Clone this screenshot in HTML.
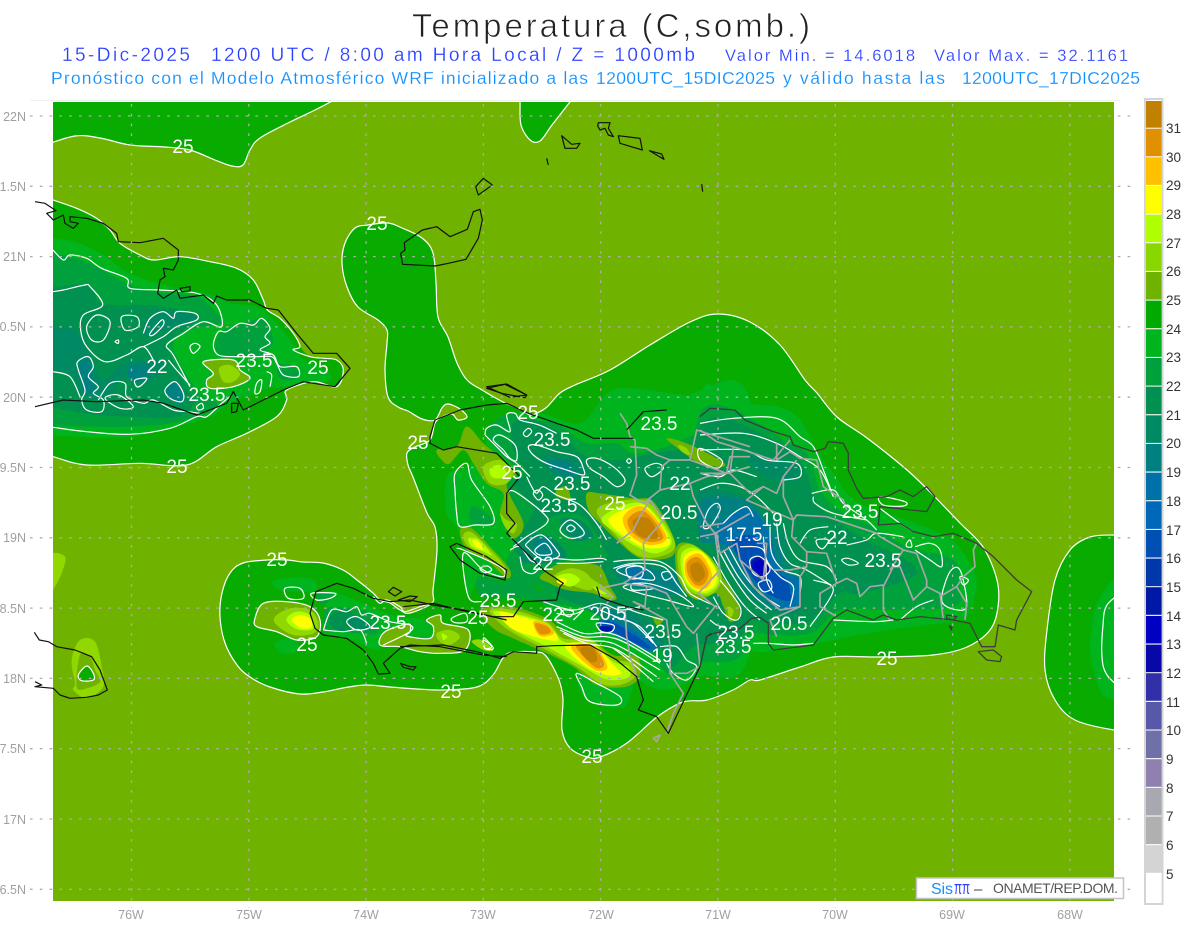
<!DOCTYPE html>
<html><head><meta charset="utf-8"><style>
html,body{margin:0;padding:0;background:#fff;width:1200px;height:927px;overflow:hidden}
svg{display:block;font-family:"Liberation Sans",sans-serif}
.z4{transform:translate(400px,380px) scale(.33333)}
.z5{transform:translate(700px,380px) scale(.33333)}
.z6{transform:translate(30px,190px) scale(.33333)}
.z9{transform:translate(335px,170px) scale(.33333)}
.z10{transform:translate(210px,550px) scale(.33333)}
.z11{transform:translate(30px,540px) scale(.33333)}
.z12{transform:translate(530px,100px) scale(.33333)}
.b{fill:#70b200}.c24{fill:#08ac00}.c23{fill:#00b41e}.c22{fill:#00a03c}.c21{fill:#009050}.c20{fill:#008a64}.c19{fill:#008080}.c18{fill:#0070a8}.c17{fill:#0050b4}.c16{fill:#0018a8}.c15{fill:#0000c4}
.w26{fill:#90d800}.w27{fill:#b0ff00}.w28{fill:#ffff00}.w29{fill:#ffc000}.w30{fill:#e09000}.w31{fill:#c08000}
.l{fill:none;stroke:#fff;stroke-width:1.2;stroke-linejoin:round;vector-effect:non-scaling-stroke}
.k{fill:none;stroke:#111;stroke-width:1.2;stroke-linejoin:round;vector-effect:non-scaling-stroke}
.d{fill:none;stroke:#3c3c3c;stroke-width:1.3;stroke-linejoin:round;vector-effect:non-scaling-stroke}
.g{fill:none;stroke:#a6a6a6;stroke-width:1.7;stroke-linejoin:round;vector-effect:non-scaling-stroke}
.ln{stroke:#adadad;stroke-width:1.3;stroke-dasharray:2.6 7.2;fill:none}
.ax{fill:#a0a0a0;font-size:12.5px}
.m{fill:#fff;font-size:19px;text-anchor:middle}
.cb{fill:#333;font-size:13.5px}
</style></head><body>
<svg width="1200" height="927" viewBox="0 0 1200 927" xmlns="http://www.w3.org/2000/svg">
<defs><clipPath id="mp"><rect x="53" y="102" width="1061" height="799"/></clipPath></defs>

<text x="412" y="37" font-size="33" fill="#222" stroke="#fff" stroke-width=".7" textLength="398" lengthAdjust="spacing">Temperatura (C,somb.)</text>
<g fill="#2a40ff" stroke="#fff" stroke-width=".2">
<text x="62" y="61" font-size="19" textLength="128" lengthAdjust="spacing">15-Dic-2025</text>
<text x="211" y="61" font-size="19" textLength="484" lengthAdjust="spacing">1200 UTC / 8:00 am Hora Local / Z = 1000mb</text>
<text x="725" y="61" font-size="16.5" textLength="190" lengthAdjust="spacing">Valor Min. = 14.6018</text>
<text x="934" y="61" font-size="16.5" textLength="194" lengthAdjust="spacing">Valor Max. = 32.1161</text>
</g>
<g fill="#1090ff" stroke="#fff" stroke-width=".15">
<text x="51" y="84" font-size="17.5" textLength="537" lengthAdjust="spacing">Pronóstico con el Modelo Atmosférico WRF inicializado a las</text>
<text x="596" y="84" font-size="17.5" textLength="179" lengthAdjust="spacing">1200UTC_15DIC2025</text>
<text x="783" y="84" font-size="17.5" textLength="162" lengthAdjust="spacing">y válido hasta las</text>
<text x="962" y="84" font-size="17.5" textLength="178" lengthAdjust="spacing">1200UTC_17DIC2025</text>
</g>

<rect x="30" y="100" width="1090" height="1" fill="#f0f0f0"/>
<rect x="53" y="102" width="1061" height="799" fill="#70b200"/>

<g id="fld" clip-path="url(#mp)">
<!-- 24 layer -->
<polygon class="c24" points="-40,152 10,150 40,146 75,136 100,138 130,145 165,147 190,150 215,160 232,166 243,165 250,150 260,138 290,122 315,110 338,98 370,70 -40,70"/>
<polygon class="c24" points="516,60 519,85 520,102 521,125 530,140 540,141 552,125 573,98 600,60"/>
<polygon class="c24" points="-120,-40 -40,-10 20,15 69,30 140,55 200,85 240,120 270,160 330,195 372,210 450,200 540,215 620,235 670,270 700,330 712,360 750,385 790,430 810,470 840,500 880,505 920,510 940,540 920,590 850,575 770,600 770,630 740,680 650,730 560,770 470,825 330,820 170,825 69,800 -40,770 -120,760" transform="translate(30,190) scale(.33333)"/>
<polygon class="c24" points="368,225 355,228 345,243 342,263 347,287 358,307 378,320 387,330 387,343 385,370 388,397 398,407 408,411 422,419 435,420 442,408 448,404 460,409 467,417 458,420 452,414 442,417 435,423 430,440 415,447 407,453 408,465 413,477 427,513 435,527 437,550 433,590 432,603 410,613 400,610 390,603 380,600 373,593 357,580 343,570 323,563 303,562 287,560 267,560 243,563 230,573 222,593 220,617 225,643 237,665 250,677 270,687 300,694 323,692 343,688 365,685 390,687 417,689 443,690 477,687 493,675 503,658 513,652 537,652 545,655 553,667 560,683 563,700 562,730 570,748 587,757 600,757 627,743 657,717 683,702 707,700 733,690 750,680 760,680 800,667 833,657 877,657 933,655 967,647 990,630 998,607 997,580 983,547 960,523 933,495 907,470 867,438 837,417 817,393 805,380 780,345 750,322 718,314 690,322 650,345 610,370 575,385 560,393 547,407 537,413 530,415 522,410 505,403 482,390 467,380 457,363 448,337 438,317 436,283 433,253 422,238 402,228 388,223"/>
<polygon class="c24" points="1180,535 1140,535 1114,535 1090,537 1070,550 1055,580 1047,630 1045,670 1055,700 1075,720 1114,730 1140,731 1180,733"/>

<!-- 23 layer -->
<polygon class="c23 z4" points="140,290 200,260 250,200 300,110 420,100 540,130 620,40 700,25 850,45 1050,60 1050,810 900,890 800,930 720,900 690,830 640,800 500,750 430,680 420,600 300,600 240,590 205,650 190,520 170,440 140,400"/>
<polygon class="c23 z4" points="530,880 580,870 690,890 690,950 660,985 560,960"/>
<polygon class="c23 z5" points="0,60 100,70 230,80 300,120 355,220 400,280 440,340 500,380 620,420 740,470 790,520 830,600 810,690 780,720 640,740 500,760 300,800 170,815 120,780 0,750"/>
<polygon class="c23 z6" points="-100,125 -20,135 20,140 130,155 210,190 300,250 420,290 530,310 600,340 680,350 740,400 790,460 820,510 870,530 900,570 760,590 700,600 600,640 540,680 420,715 300,740 140,740 20,730 -20,725 -100,720"/>
<polygon class="c23 z10" points="195,90 300,85 320,120 250,125 200,115"/>
<polygon class="c23 z10" points="195,280 250,265 265,300 220,310"/>
<polygon class="c23 z10" points="330,130 370,125 480,170 560,200 650,210 670,260 640,270 530,260 500,300 430,270 370,260 340,240 350,170"/>
<polygon class="c23" points="1180,560 1140,570 1114,580 1105,590 1095,610 1090,650 1100,690 1114,700 1140,710 1180,715"/>

<!-- 22 layer -->
<polygon class="c22 z4" points="260,150 330,100 380,120 470,130 560,190 650,190 700,220 800,200 900,160 1050,150 1050,770 900,850 860,885 800,880 740,800 650,730 520,680 430,670 420,620 320,610 320,540 350,490 320,420 340,370 300,320 360,280 300,220"/>
<polygon class="c22 z4" points="215,380 260,400 280,430 215,430"/>
<polygon class="c22 z4" points="235,590 320,610 400,620 440,660 300,650 240,650"/>
<polygon class="c22 z5" points="0,100 270,190 330,240 360,330 430,400 520,440 620,500 760,540 780,630 760,680 560,690 420,690 330,760 180,760 0,720"/>
<polygon class="c22 z6" points="-100,165 -20,175 20,180 120,200 200,230 290,280 400,310 500,320 560,370 570,400 480,420 430,470 500,600 560,640 530,670 420,700 300,710 150,710 20,710 -20,708 -100,705"/>
<polygon class="c22 z6" points="570,430 640,400 700,390 730,450 710,500 800,540 800,565 750,565 720,500 600,500 560,490"/>
<polygon class="c22 z10" points="340,190 370,170 450,180 500,200 500,250 450,250 400,245 350,240"/>
<polygon class="c22 z10" points="320,130 370,130 340,165"/>

<!-- 21 layer -->
<polygon class="c21 z4" points="340,130 400,120 480,160 560,230 660,240 760,220 900,200 1050,190 1050,720 880,800 810,860 760,740 640,700 500,660 470,620 560,540 620,530 560,420 500,400 440,420 400,470 360,520 340,490 380,430 400,380 340,310 380,280 340,210"/>
<polygon class="c21 z5" points="0,140 240,190 310,260 360,380 480,470 620,540 640,590 480,640 420,640 340,720 220,730 100,700 0,650"/>
<polygon class="c21 z6" points="-100,310 -20,305 20,300 170,285 215,340 350,345 450,360 500,385 420,450 410,470 470,590 490,640 440,680 300,680 160,670 20,640 -20,635 -100,630"/>
<polygon class="c21 z10" points="360,200 410,180 440,200 490,230 460,240 380,240"/>

<!-- 20 layer -->
<polygon class="c20 z4" points="430,230 540,240 550,290 470,290"/>
<polygon class="c20 z4" points="380,470 450,470 500,530 420,550 360,540"/>
<polygon class="c20 z4" points="480,420 540,420 580,470 520,480"/>
<polygon class="c20 z4" points="560,680 700,690 800,800 720,780"/>
<polygon class="c20 z4" points="640,550 840,580 860,650 700,640"/>
<polygon class="c20 z5" points="0,330 130,350 170,380 250,450 270,540 300,620 300,690 240,700 180,680 120,620 70,540 40,500 0,460"/>
<polygon class="c20 z5" points="140,230 280,250 290,300 200,290"/>
<polygon class="c20 z6" points="-100,420 -20,420 20,420 130,420 200,540 220,570 300,510 400,520 350,580 280,560 220,630 150,610 130,560 20,520 -20,520 -100,520"/>
<polygon class="c20 z6" points="370,370 490,370 500,395 430,410 360,440 340,420"/>
<polygon class="c20 z10" points="410,210 440,200 480,225 450,235"/>

<!-- cold -->
<polygon class="c19 z4" points="660,550 840,590 830,640 700,620"/>
<polygon class="c19 z4" points="620,690 700,720 780,800 700,790"/>
<polygon class="c19 z4" points="400,490 440,475 470,520 430,535"/>
<polygon class="c19 z4" points="440,245 500,245 530,285 470,275"/>
<polygon class="c19 z5" points="0,370 60,350 130,360 170,390 230,470 260,570 300,600 290,690 240,690 180,660 120,600 80,530 40,490 0,480"/>
<polygon class="c19 z6" points="150,520 180,510 190,580 200,600 165,610 150,560"/>
<polygon class="c19 z6" points="405,600 435,575 460,610 450,640 420,625"/>
<polygon class="c19 z6" points="300,530 360,530 340,570 300,570"/>
<polygon class="c18 z4" points="590,730 640,720 760,790 750,815 650,770"/>
<polygon class="c18 z4" points="680,560 720,565 740,590 700,610"/>
<polygon class="c18 z4" points="960,430 1050,400 1050,490 970,490"/>
<polygon class="c18 z5" points="60,430 130,385 170,400 210,470 240,570 300,600 290,680 240,680 190,640 130,570 100,510 50,480"/>
<polygon class="c17 z4" points="600,732 640,728 740,790 740,805 660,765"/>
<polygon class="c17 z5" points="100,480 170,470 210,560 260,600 270,660 220,650 180,620 120,540"/>
<polygon class="c16 z5" points="150,550 180,530 210,560 190,590 160,580"/>
<polygon class="c15 z5" points="160,552 180,540 200,560 185,580 165,572"/>
<polygon class="c16 z4" points="600,740 635,740 630,755 605,752"/>

<!-- warm blob 1 -->
<polygon class="b z4" points="560,340 600,340 700,355 760,365 820,470 820,525 760,540 710,530 650,480 600,430 565,390"/>
<polygon class="w26 z4" points="590,390 680,360 755,375 825,490 780,530 710,525 650,470"/>
<polygon class="w27 z4" points="605,415 690,370 750,385 815,480 770,520 710,500 650,460"/>
<polygon class="w28 z4" points="625,420 700,380 745,385 810,485 750,505 690,480"/>
<polygon class="w29 z4" points="670,410 730,380 800,470 750,495 690,465"/>
<polygon class="w30 z4" points="685,415 735,395 790,470 745,485 695,455"/>
<polygon class="w31 z4" points="700,420 745,415 775,470 740,475 710,460"/>
<!-- warm blob 2 -->
<polygon class="b z4" points="830,500 870,490 930,530 960,580 1000,640 1020,700 990,725 970,680 950,640 900,660 860,640 830,580"/>
<polygon class="w26 z4" points="835,510 880,495 945,550 965,600 930,645 870,635 840,590"/>
<polygon class="w26 z4" points="985,680 1000,690 995,710 985,705"/>
<polygon class="w27 z4" points="845,520 890,505 945,560 955,610 920,640 875,628 848,590"/>
<polygon class="w28 z4" points="852,530 900,512 945,565 945,615 900,635 858,600"/>
<polygon class="w29 z4" points="858,540 900,522 935,580 922,622 885,624 858,590"/>
<polygon class="w30 z4" points="863,545 895,532 925,575 912,612 885,614 863,580"/>
<polygon class="w31 z4" points="873,555 897,548 915,580 902,603 885,603 873,580"/>
<!-- southern strip -->
<polygon class="b z4" points="240,690 330,680 440,715 500,765 570,775 640,825 710,830 720,885 680,920 590,915 520,860 430,815 340,775 280,745"/>
<polygon class="w26 z4" points="270,690 340,690 440,725 490,775 570,780 640,835 695,850 705,890 660,915 600,910 530,860 430,805 350,765 300,730"/>
<polygon class="w27 z4" points="280,695 340,700 440,730 490,785 570,790 640,845 685,860 685,892 620,898 540,855 440,800 350,755 310,725"/>
<polygon class="w28 z4" points="300,695 345,705 440,735 475,780 420,775 340,748 310,720"/>
<polygon class="w28 z4" points="495,795 580,795 640,855 665,880 620,885 550,855"/>
<polygon class="w29 z4" points="400,725 440,732 462,760 420,768"/>
<polygon class="w29 z4" points="515,798 582,798 622,860 590,872 540,835"/>
<polygon class="w30 z4" points="405,730 440,738 452,757 420,762"/>
<polygon class="w30 z4" points="528,800 578,800 612,852 585,862"/>
<polygon class="w31 z4" points="542,803 577,803 592,837 575,847 550,827"/>
<!-- central Haiti blob -->
<polygon class="b z4" points="420,590 480,550 540,550 600,560 630,620 650,655 620,660 580,640 500,630 450,610"/>
<polygon class="w26 z4" points="460,590 510,565 560,580 580,620 560,630 500,610"/>
<polygon class="w26 z4" points="560,590 610,620 640,650 600,645"/>
<polygon class="w27 z4" points="470,590 510,580 540,600 510,620 480,605"/>
<polygon class="w27 z4" points="580,620 620,640 600,640"/>
<polygon class="w28 z4" points="480,595 500,600 490,615 470,605"/>
<!-- NW Haiti -->
<polygon class="b z4" points="200,140 250,190 310,240 350,280 320,320 370,430 345,475 320,450 300,400 310,340 260,310 220,250 190,210 150,250 130,245 110,210 170,200"/>
<polygon class="w26 z4" points="250,260 300,240 340,270 320,310 270,310"/>
<polygon class="w27 z4" points="270,265 300,255 320,280 300,295 275,290"/>
<polygon class="w26 z4" points="300,400 320,420 350,430 340,460 315,440"/>
<polygon class="b z4" points="180,450 215,445 280,510 330,570 320,595 260,540 200,510"/>
<polygon class="w26 z4" points="190,465 220,460 300,540 320,575 260,530 205,500"/>
<polygon class="w27 z4" points="205,475 235,478 275,525 250,515 215,500"/>
<polygon class="w28 z4" points="218,482 235,485 250,510 225,498"/>
<polygon class="b z4" points="470,330 500,320 510,360 470,350"/>
<polygon class="b z4" points="800,175 860,190 960,240 970,260 900,250 840,210"/>
<polygon class="w26 z4" points="835,195 860,205 870,225 845,215"/>
<polygon class="b z4" points="760,710 790,720 770,735"/>
<!-- SW Haiti -->
<polygon class="b z10" points="135,205 160,160 230,155 300,170 330,210 320,260 260,270 200,245 140,230"/>
<polygon class="w26 z10" points="195,200 240,175 300,180 325,220 310,250 250,255 200,225"/>
<polygon class="w27 z10" points="230,205 260,185 300,195 310,235 270,240 240,225"/>
<polygon class="w28 z10" points="245,210 270,195 300,205 305,230 275,235"/>
<polygon class="b z10" points="650,210 690,195 700,220 775,240 765,300 690,310 630,305 570,290 510,285 525,245 595,222 600,245 590,258 660,265 670,230"/>
<polygon class="w26 z10" points="680,250 720,240 750,260 720,285 690,275"/>
<polygon class="w27 z10" points="695,250 712,260 700,270"/>
<polygon class="w26 z10" points="785,275 815,270 850,300 820,300"/>
<!-- Cuba warm -->
<polygon class="b z6" points="520,515 610,510 630,540 660,565 610,590 540,595 530,570 550,550"/>
<polygon class="w26 z6" points="567,535 600,525 630,550 610,575 580,575"/>
<!-- Jamaica warm -->
<polygon class="w26 z11" points="150,300 195,305 215,380 220,440 170,475 130,450 135,430 125,360"/>
<polygon class="b z11" points="150,345 180,350 195,390 210,425 170,445 140,440"/>
<polygon class="c24 z11" points="145,405 170,378 190,400 190,420 155,422"/>
<polygon class="w26 z11" points="60,48 105,50 95,100 69,150 60,160"/>

<!-- 25 contours -->
<g class="l">
<polyline class="l" points="10,150 40,146 75,136 100,138 130,145 165,147 190,150 215,160 232,166 243,165 250,150 260,138 290,122 315,110 338,98"/>
<polyline class="l" points="519,85 520,102 521,125 530,140 540,141 552,125 573,98"/>
<polyline class="l z6" points="-40,-10 20,15 69,30 140,55 200,85 240,120 270,160 330,195 372,210 450,200 540,215 620,235 670,270 700,330 712,360 750,385 790,430 810,470 790,480 840,500 880,505 920,510 940,540 920,590 850,575 770,600 770,630 740,680 650,730 560,770 470,825 330,820 170,825 69,800 -40,770"/>
<polygon class="l" points="368,225 355,228 345,243 342,263 347,287 358,307 378,320 387,330 387,343 385,370 388,397 398,407 408,411 422,419 435,420 442,408 448,404 460,409 467,417 458,420 452,414 442,417 435,423 430,440 415,447 407,453 408,465 413,477 427,513 435,527 437,550 433,590 432,603 410,613 400,610 390,603 380,600 373,593 357,580 343,570 323,563 303,562 287,560 267,560 243,563 230,573 222,593 220,617 225,643 237,665 250,677 270,687 300,694 323,692 343,688 365,685 390,687 417,689 443,690 477,687 493,675 503,658 513,652 537,652 545,655 553,667 560,683 563,700 562,730 570,748 587,757 600,757 627,743 657,717 683,702 707,700 733,690 750,680 760,680 800,667 833,657 877,657 933,655 967,647 990,630 998,607 997,580 983,547 960,523 933,495 907,470 867,438 837,417 817,393 805,380 780,345 750,322 718,314 690,322 650,345 610,370 575,385 560,393 547,407 537,413 530,415 522,410 505,403 482,390 467,380 457,363 448,337 438,317 436,283 433,253 422,238 402,228 388,223"/>
<polyline class="l" points="1140,535 1114,535 1090,537 1070,550 1055,580 1047,630 1045,670 1055,700 1075,720 1114,730 1140,731"/>
<polyline class="l" points="1125,590 1107,605 1103,625 1102,657 1107,675 1125,692"/>
<polygon class="l z11" points="145,405 170,378 190,400 190,420 155,422"/>

<!-- Cuba -->
<polyline class="l z6" points="69,180 100,210 120,195 170,205 215,235 290,265 300,295 390,300 500,310 560,345 575,410 520,395 460,430 410,465 430,495 480,590"/>
<polyline class="l z6" points="69,305 100,300 165,285 180,290 218,345 160,375 152,420 170,470 225,515 290,495 340,470 370,510"/>
<polygon class="l z6" points="170,410 200,375 240,395 220,450 185,450"/>
<polygon class="l z6" points="275,380 320,380 325,410 285,420"/>
<polyline class="l z6" points="340,430 360,385 400,365 430,385 440,365 495,370 500,390 440,410 400,440 340,470"/>
<polygon class="l z6" points="360,430 395,390 400,405 370,435"/>
<polygon class="l z6" points="143,515 175,500 190,530 175,560 205,590 190,610 220,630 215,665 170,660 155,630 165,600 145,540"/>
<polyline class="l z6" points="69,545 120,560 150,620"/>
<polyline class="l z6" points="205,630 240,580 285,580 290,620 340,640 370,630 430,660 475,665 510,670"/>
<polygon class="l z6" points="405,600 435,575 460,610 455,635 420,625"/>
<polygon class="l z6" points="315,570 350,565 335,585 320,590"/>
<polygon class="l z6" points="225,625 265,615 310,650 270,655"/>
<polyline class="l z6" points="415,510 440,540 480,585"/>
<polygon class="l z6" points="550,465 565,425 590,425 630,400 670,405 695,385 720,415 705,440 720,460 690,480 730,495 750,530 800,530 805,560 760,555 740,520 725,500 680,500 610,500 565,495"/>
<polygon class="l z6" points="520,515 610,510 630,540 660,565 610,590 540,595 530,570 550,550"/>
<polygon class="l z6" points="480,470 495,460 510,470 490,490"/>
<polygon class="l z6" points="680,580 695,570 690,605 675,610"/>
<polygon class="l z6" points="500,650 515,640 520,655 505,660"/>
<polyline class="l z6" points="69,712 170,725 300,733 420,715 500,680 530,680 575,640 600,620"/>
<polyline class="l z6" points="710,545 725,555 720,590"/>
<polygon class="l z6" points="255,455 265,450 265,460"/>

<!-- SW Haiti -->
<polygon class="l z10" points="225,115 270,115 280,145 235,145"/>
<polygon class="l z10" points="305,130 375,130 360,145 320,150"/>
<polygon class="l z10" points="135,205 160,160 230,155 300,170 330,210 320,260 260,270 200,245 140,230"/>
<polyline class="l z10" points="340,240 365,180 410,185 440,170 455,195 480,190 540,215 600,225 600,245 520,285"/>
<polyline class="l z10" points="490,140 510,160 530,150 570,170 585,185 630,170 665,160"/>
<polygon class="l z10" points="410,215 440,200 480,230 440,240"/>
<polyline class="l z10" points="340,240 400,245 450,240 470,280"/>
<polygon class="l z10" points="650,210 690,195 700,220 775,240 765,300 690,310 630,305 570,290 510,285 525,245 595,222 600,245 590,258 660,265 670,230"/>
<polygon class="l z10" points="725,205 765,190 770,215 735,218"/>
<polygon class="l z10" points="820,265 830,270 850,295 825,295"/>

<!-- West Hispaniola -->
<polygon class="l z4" points="165,280 200,250 215,300 270,380 280,430 225,435 180,440 170,400 165,330"/>
<polyline class="l z4" points="255,165 260,145 290,135 330,155 320,105 345,100 360,120 400,130 430,140 470,160"/>
<polyline class="l z4" points="255,165 290,200 320,230 350,250 390,290"/>
<polygon class="l z4" points="280,180 300,165 345,195 350,240 330,235 310,210"/>
<polygon class="l z4" points="385,200 410,195 470,215 530,230 550,265 550,285 500,270 440,250 400,225"/>
<polygon class="l z4" points="560,240 590,235 640,260 675,300 650,320 610,290 570,265"/>
<polygon class="l z4" points="370,160 385,145 395,155 380,170"/>
<polygon class="l z4" points="735,265 770,250 790,265 755,290"/>
<polygon class="l z4" points="680,243 687,236 694,243 687,250"/>
<polyline class="l z4" points="380,290 395,320 410,340 430,320 470,345 540,375 590,430 620,480"/>
<polyline class="l z4" points="320,340 345,335 430,400 440,430 380,470 340,500"/>
<polygon class="l z4" points="480,450 510,420 545,445 550,465 510,475"/>
<polygon class="l z4" points="500,445 512,435 525,445 512,455"/>
<polygon class="l z4" points="380,490 425,465 470,510 475,530 430,540 385,505"/>
<polygon class="l z4" points="405,510 435,490 455,520 420,525"/>
<polygon class="l z4" points="400,340 415,330 428,345 415,360"/>
<polyline class="l z4" points="330,510 360,500 390,540 420,555 400,580 370,570 360,530"/>
<polyline class="l z4" points="460,535 530,540 600,535 620,540"/>
<polyline class="l z4" points="470,550 540,550 610,545"/>
<polyline class="l z4" points="640,545 690,540 780,545 840,590 870,640 950,680"/>
<polyline class="l z4" points="640,565 700,550 790,560 830,610 860,650"/>
<polyline class="l z4" points="170,505 190,510 300,560 310,590 250,570 190,520 205,650 245,665"/>
<polygon class="l z4" points="240,565 262,558 275,570 255,578"/>
<polygon class="l z4" points="650,570 700,555 750,575 760,600 690,590"/>
<polygon class="l z4" points="680,565 725,560 725,590 690,595"/>
<polygon class="l z4" points="785,580 805,575 815,590 795,600"/>
<polygon class="l z4" points="700,610 760,625 700,630"/>
<polygon class="l z4" points="670,620 740,610 830,640 880,680 800,660 720,640"/>
<polygon class="l z4" points="590,730 640,735 635,755 605,755"/>
<polyline class="l z4" points="430,665 520,690 600,670 660,690 720,680"/>
<polyline class="l z4" points="470,700 500,705 530,700 550,690 520,720"/>
<polygon class="l z4" points="490,690 520,695 510,710 495,705"/>
<polyline class="l z4" points="470,725 550,760 620,758 680,780 780,840"/>
<polyline class="l z4" points="470,740 550,770 620,770 680,790 780,850"/>
<polyline class="l z4" points="480,750 550,780 620,785 670,805 780,870"/>
<polyline class="l z4" points="490,760 560,790 625,800 670,820 770,890"/>
<polyline class="l z4" points="640,805 680,835 760,905"/>
<polyline class="l z4" points="600,690 660,715 720,740 770,800"/>
<polyline class="l z4" points="640,710 700,730 760,790"/>
<polyline class="l z4" points="780,800 830,800 860,840 890,860 860,900 820,880 800,850"/>
<polyline class="l z4" points="680,685 720,700 790,720"/>
<polyline class="l z4" points="930,720 950,735 980,745"/>
<polygon class="l z4" points="530,880 590,910 660,950 650,975 570,965 545,920"/>
<polygon class="l z4" points="250,780 275,800 255,805"/>

<!-- East -->
<polyline class="l z5" points="0,130 100,115 230,115 300,170 340,200 370,270 400,350"/>
<polyline class="l z5" points="0,165 130,160 230,190 300,230 360,270 400,350"/>
<polyline class="l z5" points="0,210 130,210 200,240 290,250 300,290 250,300"/>
<polygon class="l z5" points="0,205 65,240 50,265 0,240"/>
<polyline class="l z5" points="335,340 400,330 430,370 500,420 530,450"/>
<polyline class="l z5" points="340,350 345,370 400,400 500,420"/>
<polyline class="l z5" points="0,330 60,310 120,320 170,350 220,400"/>
<polyline class="l z5" points="0,280 60,290 100,270 170,290"/>
<polygon class="l z5" points="10,440 25,390 50,370 60,390 30,440"/>
<polyline class="l z5" points="70,430 100,400 140,380 160,410"/>
<polygon class="l z5" points="150,540 180,530 210,565 190,590 160,580"/>
<polygon class="l z5" points="175,610 205,600 215,625 190,635"/>
<polyline class="l z5" points="120,500 190,510 200,600 220,640"/>
<polyline class="l z5" points="55,510 100,590 150,660 200,700"/>
<polyline class="l z5" points="40,530 85,610 135,680 180,720"/>
<polyline class="l z5" points="70,510 115,590 165,650 215,690"/>
<polyline class="l z5" points="85,500 130,580 180,640 240,680"/>
<polyline class="l z5" points="230,430 240,500 270,550 320,570 400,620"/>
<polyline class="l z5" points="210,440 215,520 250,570 300,590 300,640"/>
<polyline class="l z5" points="250,430 265,490 300,540 380,560 410,600"/>
<polyline class="l z5" points="190,470 200,540 240,590 280,620 270,680"/>
<polygon class="l z5" points="350,480 385,480 370,505 355,500"/>
<polyline class="l z5" points="300,490 330,450 385,440"/>
<polyline class="l z5" points="440,495 500,480 530,460 610,470"/>
<polygon class="l z5" points="425,540 445,535 475,550 445,555"/>
<polygon class="l z5" points="620,490 630,480 635,500 620,500"/>
<polyline class="l z5" points="645,500 690,490 720,510 725,560 690,540 645,510"/>
<polyline class="l z5" points="600,720 650,680 700,660"/>
<polygon class="l z5" points="725,650 750,575 780,570 800,660 790,690 740,680"/>
<polygon class="l z5" points="780,590 805,600 790,615"/>
<polyline class="l z5" points="400,720 520,725 580,720"/>
<polyline class="l z5" points="160,790 200,790 280,795 340,790"/>
<polyline class="l z5" points="60,600 120,680 110,720 70,700 40,650"/>
<polyline class="l z5" points="330,740 400,630 340,600"/>
<polygon class="l z5" points="540,350 615,365 610,378 550,375"/>
<polyline class="l z5" points="540,385 600,430 640,455"/>
</g>

<!-- grey borders -->
<polyline class="g z4" points="660,100 680,130 690,170 705,180 710,285 690,345 730,370 750,360 790,420 730,490 735,570 670,610 600,625 640,650 620,670"/>
<polyline class="g z4" points="690,200 740,205 770,225 810,240 785,260 780,330 730,370"/>
<polyline class="g z4" points="810,240 870,240 890,150 1050,200"/>
<polyline class="g z4" points="870,240 980,280 1050,260"/>
<polyline class="g z4" points="870,310 920,290 980,280 990,230 1050,230"/>
<polyline class="g z4" points="780,330 870,310 880,350 920,430 945,460 1050,400"/>
<polyline class="g z4" points="650,490 700,450 725,400 750,360"/>
<polyline class="g z4" points="670,610 750,620 800,640 860,740 880,760 945,680 895,640 960,570 945,460"/>
<polyline class="g z4" points="740,620 735,680 700,665 800,720 810,800 810,880 850,940 820,1000 800,1060"/>
<polyline class="g z4" points="810,880 860,880 900,860 890,760"/>
<polyline class="g z4" points="675,690 680,770 690,830 710,890"/>
<polygon class="g z4" points="760,1075 780,1065 770,1085"/>
<polyline class="g z5" points="0,150 50,185 100,200 220,240 270,180"/>
<polyline class="g z5" points="230,190 230,240 270,215 300,235 350,240 370,320 430,360 440,390"/>
<polyline class="g z5" points="100,200 90,280 0,280"/>
<polyline class="g z5" points="90,280 150,340 190,320 230,340 250,290 290,240"/>
<polyline class="g z5" points="250,290 250,350 280,420 290,405 380,410 530,460 540,470 610,510 650,520 680,600 680,620 640,660 600,560 580,560 550,620 550,690 570,720"/>
<polyline class="g z5" points="280,420 275,470 320,515 320,560 270,570 220,570"/>
<polyline class="g z5" points="320,515 380,520 410,610 360,640 360,680 410,710"/>
<polyline class="g z5" points="120,540 160,620 240,690 300,680 300,590 320,560"/>
<polyline class="g z5" points="300,680 210,720 230,770"/>
<polyline class="g z5" points="410,610 440,595 470,610 480,650 510,620 550,615"/>
<polyline class="g z5" points="610,510 570,570"/>
<polyline class="g z5" points="680,620 720,640 730,720"/>
<polyline class="g z5" points="720,650 770,620 790,590 825,560 820,510 830,490"/>
<polyline class="g z5" points="770,620 800,670 795,720"/>
<polyline class="g z5" points="0,470 50,460 60,520 110,490 120,540 190,600 200,490 170,490"/>
<polyline class="g z5" points="0,440 70,430"/>
<polyline class="g z5" points="190,320 140,360 280,420"/>
</g>

<!-- coast -->
<polyline class="k z4" points="90,170 105,120 180,90 260,75 320,70 385,100 470,130 530,150 580,175 650,175 700,175"/>
<polyline class="k z4" points="680,150 730,95 800,90"/>
<polyline class="k z4" points="90,170 90,190 130,210 170,200 290,220 360,290 320,340 320,400 345,430 320,460 430,570 490,610 480,620 470,660 370,665 340,710 280,710 180,690 100,670 10,680"/>
<polygon class="k z4" points="150,500 170,490 260,530 320,570 315,600 240,580 180,540"/>
<polygon class="k z4" points="260,20 320,12 380,45 330,52"/>
<polyline class="k z4" points="570,795 460,797 410,800 410,820 340,815 300,835 230,815 130,795 0,800"/>
<polyline class="k z4" points="570,795 650,840 710,890 730,960 715,990 770,1010 805,1060 850,965 900,860 920,770 935,760"/>
<polyline class="k z4" points="590,620 600,650 620,660 680,680 730,690"/>
<polyline class="d z5" points="0,110 30,85 105,90 135,120 220,155 270,170 280,195 340,215 375,205 385,185 430,190 445,220 445,270 470,325 490,355 560,350 600,330 640,350 680,320 705,350 680,395 540,380 535,435 600,430 640,455 700,470 760,460 830,490 880,530 950,600 995,635 950,720 945,750 895,735 885,800 845,800 810,730 760,720 660,710 590,720 550,705 520,720 440,690 400,715 340,795 220,810 205,790 205,730 180,712 155,715 120,745 40,760 20,770 0,860"/>
<polygon class="d z5" points="835,815 880,810 905,830 900,845 860,840"/>
<polygon class="d z5" points="740,705 770,710 760,720 740,715"/>
<polygon class="d z5" points="748,738 756,742 754,750"/>
<polyline class="k z10" points="300,190 318,125 380,100 430,115 490,145 540,155 600,150 670,165 760,180 890,210"/>
<polyline class="k z10" points="300,190 315,235 340,255 410,265 460,300 490,340 505,372 540,370 520,340 570,295 600,285 690,290 820,315 890,320"/>
<polygon class="k z10" points="535,125 550,112 575,125 555,138"/>
<polygon class="k z10" points="565,150 600,138 622,140 600,155"/>
<polygon class="k z10" points="572,340 600,350 618,350 610,360 580,352"/>
<polyline class="k z6" points="15,35 45,40 78,62 50,70 70,90 100,75 105,100 130,115 145,100 120,95 120,80 170,85 220,100 260,130 265,155 330,158 400,145 445,180 445,210 430,240 400,235 405,260 390,270 383,310 400,325 440,300 450,325 520,315 550,340 560,318 590,330 660,330 710,355 745,360 800,430 850,490 920,490 960,535 915,590 820,575 760,600 640,660 610,605 590,640 500,675 400,640 340,630 200,635 100,630 15,650"/>
<polygon class="k z6" points="450,295 480,290 480,303 455,305"/>
<polygon class="k z6" points="605,640 625,640 620,665 605,668"/>
<polygon class="k z9" points="445,25 472,45 430,75 422,50"/>
<polygon class="k z9" points="435,118 442,150 430,205 393,268 340,280 300,288 203,283 197,250 210,240 208,218 262,180 305,170 345,200 397,178 415,125"/>
<polygon class="k z9" points="455,655 510,643 575,675 570,683 500,670"/>
<polygon class="k z12" points="95,107 125,133 150,130 140,145 105,145"/>
<polyline class="k z12" points="50,175 55,195"/>
<polygon class="k z12" points="205,68 240,68 235,85 250,110 235,105 225,85 210,90 203,78"/>
<polygon class="k z12" points="265,107 330,115 337,150 270,130"/>
<polygon class="k z12" points="358,152 395,162 402,178"/>
<polyline class="k z12" points="515,252 518,275"/>
<polyline class="k z11" points="13,277 28,300 55,305 80,320 135,330 185,350 210,390 232,450 205,465 170,472 120,475 90,465 70,445 15,440 35,435 15,425"/>

<!-- grid -->
<g class="ln">
<line x1="30" x2="1136" y1="116" y2="116"/><line x1="30" x2="1136" y1="186.3" y2="186.3"/><line x1="30" x2="1136" y1="256.6" y2="256.6"/><line x1="30" x2="1136" y1="326.9" y2="326.9"/><line x1="30" x2="1136" y1="397.2" y2="397.2"/><line x1="30" x2="1136" y1="467.5" y2="467.5"/><line x1="30" x2="1136" y1="537.8" y2="537.8"/><line x1="30" x2="1136" y1="608.1" y2="608.1"/><line x1="30" x2="1136" y1="678.4" y2="678.4"/><line x1="30" x2="1136" y1="748.7" y2="748.7"/><line x1="30" x2="1136" y1="819" y2="819"/><line x1="30" x2="1136" y1="889.3" y2="889.3"/>
<line y1="104" y2="908" x1="131.5" x2="131.5"/><line y1="104" y2="908" x1="248.8" x2="248.8"/><line y1="104" y2="908" x1="366.1" x2="366.1"/><line y1="104" y2="908" x1="483.4" x2="483.4"/><line y1="104" y2="908" x1="600.7" x2="600.7"/><line y1="104" y2="908" x1="718" x2="718"/><line y1="104" y2="908" x1="835.3" x2="835.3"/><line y1="104" y2="908" x1="952.6" x2="952.6"/><line y1="104" y2="908" x1="1069.9" x2="1069.9"/>
</g>

<!-- axis -->
<g class="ax" text-anchor="end">
<text x="26" y="121">22N</text><text x="26" y="191">1.5N</text><text x="26" y="261">21N</text><text x="26" y="331">0.5N</text><text x="26" y="402">20N</text><text x="26" y="472">9.5N</text><text x="26" y="542">19N</text><text x="26" y="613">8.5N</text><text x="26" y="683">18N</text><text x="26" y="753">7.5N</text><text x="26" y="824">17N</text><text x="26" y="894">6.5N</text>
</g>
<g class="ax" text-anchor="middle">
<text x="131" y="919">76W</text><text x="249" y="919">75W</text><text x="366" y="919">74W</text><text x="483" y="919">73W</text><text x="601" y="919">72W</text><text x="718" y="919">71W</text><text x="835" y="919">70W</text><text x="952" y="919">69W</text><text x="1070" y="919">68W</text>
</g>

<!-- map labels -->
<g class="m">
<text x="183" y="153">25</text><text x="377" y="230">25</text><text x="318" y="374">25</text><text x="177" y="473">25</text><text x="277" y="566">25</text><text x="307" y="651">25</text><text x="451" y="698">25</text><text x="592" y="763">25</text><text x="887" y="665">25</text><text x="418" y="449">25</text><text x="528" y="419">25</text><text x="512" y="479">25</text><text x="615" y="510">25</text><text x="478" y="624">25</text>
<text x="254" y="367">23.5</text><text x="207" y="401">23.5</text><text x="659" y="430">23.5</text><text x="552" y="446">23.5</text><text x="572" y="490">23.5</text><text x="559" y="512">23.5</text><text x="388" y="629">23.5</text><text x="498" y="607">23.5</text><text x="663" y="638">23.5</text><text x="736" y="639">23.5</text><text x="733" y="653">23.5</text><text x="860" y="518">23.5</text><text x="883" y="567">23.5</text>
<text x="157" y="373">22</text><text x="680" y="490">22</text><text x="837" y="544">22</text><text x="543" y="570">22</text><text x="553" y="621">22</text>
<text x="679" y="519">20.5</text><text x="608" y="620">20.5</text><text x="789" y="630">20.5</text>
<text x="772" y="526">19</text><text x="662" y="662">19</text><text x="744" y="541">17.5</text>
</g>

<!-- legend box -->
<rect x="916.5" y="878" width="207" height="20.5" fill="#fff" stroke="#c4c4c4" stroke-width="1.5"/>
<text x="931" y="894" font-size="16" fill="#1090ff" textLength="22" lengthAdjust="spacing">Sis</text>
<text x="954" y="894" font-size="18" fill="#2a40ff" textLength="16" lengthAdjust="spacingAndGlyphs">ππ</text>
<text x="974" y="894" font-size="15" fill="#444">–</text>
<text x="993" y="893" font-size="14" fill="#555" textLength="125" lengthAdjust="spacing">ONAMET/REP.DOM.</text>

<!-- colorbar -->
<rect x="1145" y="99" width="17.5" height="805" fill="#fff" stroke="#d4d4d4" stroke-width="2"/>
<g>
<rect x="1146" y="101" width="15.6" height="26.7" fill="#c08000"/>
<rect x="1146" y="128.7" width="15.6" height="27.6" fill="#e09000"/>
<rect x="1146" y="157.3" width="15.6" height="27.6" fill="#ffc000"/>
<rect x="1146" y="186" width="15.6" height="27.6" fill="#ffff00"/>
<rect x="1146" y="214.6" width="15.6" height="27.6" fill="#b0ff00"/>
<rect x="1146" y="243.3" width="15.6" height="27.6" fill="#88d800"/>
<rect x="1146" y="272" width="15.6" height="27.6" fill="#70b200"/>
<rect x="1146" y="300.6" width="15.6" height="27.6" fill="#00aa00"/>
<rect x="1146" y="329.3" width="15.6" height="27.6" fill="#00b41e"/>
<rect x="1146" y="358" width="15.6" height="27.6" fill="#00a03c"/>
<rect x="1146" y="386.6" width="15.6" height="27.6" fill="#009050"/>
<rect x="1146" y="415.3" width="15.6" height="27.6" fill="#008a64"/>
<rect x="1146" y="443.9" width="15.6" height="27.6" fill="#008080"/>
<rect x="1146" y="472.6" width="15.6" height="27.6" fill="#0070a8"/>
<rect x="1146" y="501.3" width="15.6" height="27.6" fill="#0068b8"/>
<rect x="1146" y="529.9" width="15.6" height="27.6" fill="#0050b4"/>
<rect x="1146" y="558.6" width="15.6" height="27.6" fill="#0038ac"/>
<rect x="1146" y="587.2" width="15.6" height="27.6" fill="#0018a8"/>
<rect x="1146" y="615.9" width="15.6" height="27.6" fill="#0000c4"/>
<rect x="1146" y="644.6" width="15.6" height="27.6" fill="#0808a8"/>
<rect x="1146" y="673.2" width="15.6" height="27.6" fill="#3030a8"/>
<rect x="1146" y="701.9" width="15.6" height="27.6" fill="#5858a8"/>
<rect x="1146" y="730.5" width="15.6" height="27.6" fill="#7070a8"/>
<rect x="1146" y="759.2" width="15.6" height="27.6" fill="#9080b0"/>
<rect x="1146" y="787.9" width="15.6" height="27.6" fill="#a8a8b0"/>
<rect x="1146" y="816.5" width="15.6" height="27.6" fill="#b0b0b0"/>
<rect x="1146" y="845.2" width="15.6" height="27.6" fill="#d4d4d4"/>
<rect x="1146" y="873.8" width="15.6" height="29" fill="#fff"/>
</g>
<g class="cb">
<text x="1166" y="133">31</text><text x="1166" y="162">30</text><text x="1166" y="190">29</text><text x="1166" y="219">28</text><text x="1166" y="248">27</text><text x="1166" y="276">26</text><text x="1166" y="305">25</text><text x="1166" y="334">24</text><text x="1166" y="362">23</text><text x="1166" y="391">22</text><text x="1166" y="420">21</text><text x="1166" y="448">20</text><text x="1166" y="477">19</text><text x="1166" y="506">18</text><text x="1166" y="535">17</text><text x="1166" y="563">16</text><text x="1166" y="592">15</text><text x="1166" y="621">14</text><text x="1166" y="649">13</text><text x="1166" y="678">12</text><text x="1166" y="707">11</text><text x="1166" y="735">10</text><text x="1166" y="764">9</text><text x="1166" y="793">8</text><text x="1166" y="821">7</text><text x="1166" y="850">6</text><text x="1166" y="879">5</text>
</g>
</svg>
<script>
(function(){
var ns="http://www.w3.org/2000/svg";
var els=document.querySelectorAll("#fld polygon, #fld polyline");
for(var i=0;i<els.length;i++){
  var e=els[i];
  if(e.classList.contains("g"))continue;
  var n=e.getAttribute("points").trim().split(/\s+/).map(function(s){return s.split(",").map(Number);});
  if(n.length<3)continue;
  var closed=e.tagName.toLowerCase()==="polygon",L=n.length;
  var at=function(k){return closed?n[(k+L)%L]:n[Math.max(0,Math.min(L-1,k))];};
  var d="M"+n[0][0]+" "+n[0][1];
  var segs=closed?L:L-1;
  for(var j=0;j<segs;j++){
    var p0=at(j-1),p1=at(j),p2=at(j+1),p3=at(j+2);
    d+="C"+(p1[0]+(p2[0]-p0[0])/6).toFixed(1)+" "+(p1[1]+(p2[1]-p0[1])/6).toFixed(1)+" "+(p2[0]-(p3[0]-p1[0])/6).toFixed(1)+" "+(p2[1]-(p3[1]-p1[1])/6).toFixed(1)+" "+p2[0]+" "+p2[1];
  }
  if(closed)d+="Z";
  var p=document.createElementNS(ns,"path");
  p.setAttribute("d",d);
  p.setAttribute("class",e.getAttribute("class"));
  if(e.getAttribute("transform"))p.setAttribute("transform",e.getAttribute("transform"));
  e.parentNode.replaceChild(p,e);
}
})();
</script>
</body></html>
